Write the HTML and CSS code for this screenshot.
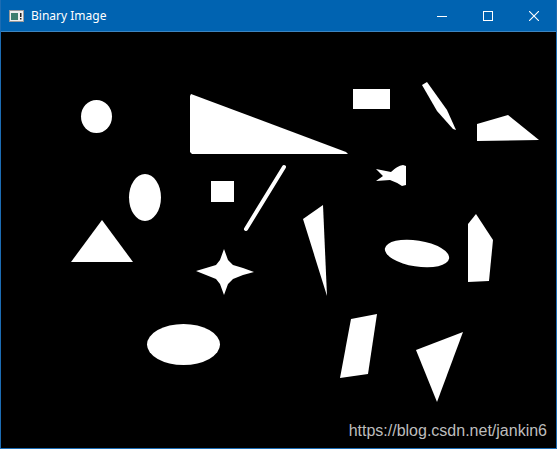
FILE: index.html
```html
<!DOCTYPE html>
<html lang="en">
<head>
  <meta charset="UTF-8" />
  <title>Binary Image</title>
  <link rel="stylesheet" href="styles.css">
</head>
<body>
  <div class="window">
    <div class="titlebar">
      <svg class="app-icon" width="15" height="12" viewBox="0 0 15 12">
        <rect x="0.5" y="0.5" width="14" height="11" fill="#f0f0f0" stroke="#9a9a9a"/>
        <rect x="2" y="3" width="7" height="7" fill="#3f7f6f"/>
        <rect x="11" y="3" width="1.5" height="4" fill="#202020"/>
        <rect x="11" y="8" width="1.5" height="1.5" fill="#202020"/>
      </svg>
      <span class="title">Binary Image</span>
      <div class="controls">
        <button class="ctl" aria-label="minimize">
          <svg width="10" height="10" viewBox="0 0 10 10"><path d="M0 5.5h10" stroke="#fff" stroke-width="1"/></svg>
        </button>
        <button class="ctl" aria-label="maximize">
          <svg width="10" height="10" viewBox="0 0 10 10"><rect x="0.5" y="0.5" width="9" height="9" fill="none" stroke="#fff" stroke-width="1"/></svg>
        </button>
        <button class="ctl" aria-label="close">
          <svg width="10" height="10" viewBox="0 0 10 10"><path d="M0 0L10 10M10 0L0 10" stroke="#fff" stroke-width="1.1"/></svg>
        </button>
      </div>
    </div>

    <div class="canvas">
      <!-- shapes in page coordinates -->
      <svg class="shapes" width="555" height="416" viewBox="1 32 555 416">
        <g fill="#fff">
          <ellipse cx="96.5" cy="116.5" rx="15.5" ry="16.5"/>
          <polygon points="191,94 190,96 190,152 192,154 348,154 346,152"/>
          <rect x="353" y="89" width="37" height="20"/>
          <polygon points="422,85 427,82 447,110 456,130 453,129 437,111"/>
          <polygon points="477,124 508,115 539,140 477,141"/>
          <path d="M376,169 L391,172 Q397,166 403,165 L406,166 L406,185 L402,186 Q396,182 390,180 L376,181 L383,176 Z"/>
          <ellipse cx="145" cy="197.5" rx="16" ry="23.5"/>
          <rect x="211" y="181" width="23" height="21"/>
          <path d="M284,167 L246,229" stroke="#fff" stroke-width="4" stroke-linecap="round"/>
          <polygon points="102,220 71,262 133,262"/>
          <polygon points="224,249 228,260 233,265 243,268 254,272 243,275 233,279 228,284 224,295 220,284 216,279 206,275 196,271 206,268 216,265 220,260"/>
          <polygon points="303,219 323,205 327,296"/>
          <ellipse cx="417" cy="253.5" rx="32.5" ry="13" transform="rotate(9 417 253.5)"/>
          <polygon points="476,214 493,240 489,281 468,282 468,224"/>
          <ellipse cx="183.5" cy="344.5" rx="36.5" ry="20.5"/>
          <polygon points="351,319 377,314 368,374 340,378"/>
          <polygon points="416,350 463,332 437,402"/>
        </g>
      </svg>
      <span class="watermark">https://blog.csdn.net/jankin6</span>
    </div>
  </div>
</body>
</html>
```

FILE: styles.css
```css
body {
  margin: 0;
  background-color: #000;
}

.window {
  width: 557px;
  height: 449px;
  box-sizing: border-box;
  border: 1px solid #1c6cb3;
  border-top: none;
  display: flex;
  flex-direction: column;
  overflow: hidden;
}

.titlebar {
  height: 31px;
  flex: none;
  display: flex;
  align-items: center;
  background-color: #0063b1;
  border-bottom: 1px solid #3d84bf;
  margin: 0 -1px;
  padding-left: 9px;
  color: #fff;
}

.app-icon {
  flex: none;
  margin-top: 1px;
}

.title {
  margin-left: 7px;
  font-family: "Segoe UI", "Noto Sans", "Liberation Sans", sans-serif;
  font-size: 12px;
  line-height: 1;
}

.controls {
  margin-left: auto;
  display: flex;
  height: 100%;
}

.ctl {
  width: 46px;
  height: 100%;
  border: none;
  padding: 0;
  background: transparent;
  display: flex;
  align-items: center;
  justify-content: center;
}

.canvas {
  flex: 1;
  position: relative;
  background-color: #000;
}

.shapes {
  display: block;
}

.watermark {
  position: absolute;
  right: 9px;
  bottom: 9px;
  font-family: "Liberation Sans", Arial, sans-serif;
  font-size: 16px;
  color: #bdbdbd;
  line-height: 1;
}
```
